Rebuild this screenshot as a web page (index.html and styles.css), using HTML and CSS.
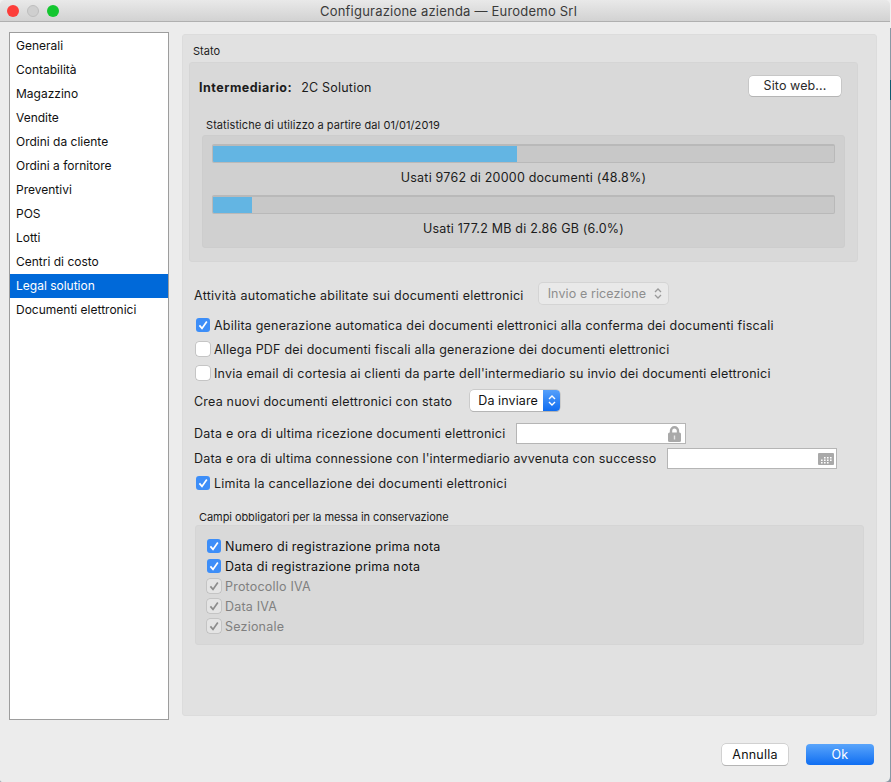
FILE: index.html
```html
<!DOCTYPE html>
<html lang="it">
<head>
<meta charset="utf-8">
<title>Configurazione azienda — Eurodemo Srl</title>
<link rel="stylesheet" href="styles.css">
</head>
<body>
<div class="window">
  <header class="titlebar">
    <div class="lights"><span class="light red"></span><span class="light grey"></span><span class="light green"></span></div>
    <div class="title">Configurazione azienda — Eurodemo Srl</div>
  </header>
  <div class="main">
    <nav class="sidebar">
      <div class="nav-item">Generali</div>
      <div class="nav-item">Contabilità</div>
      <div class="nav-item">Magazzino</div>
      <div class="nav-item">Vendite</div>
      <div class="nav-item">Ordini da cliente</div>
      <div class="nav-item">Ordini a fornitore</div>
      <div class="nav-item">Preventivi</div>
      <div class="nav-item">POS</div>
      <div class="nav-item">Lotti</div>
      <div class="nav-item">Centri di costo</div>
      <div class="nav-item selected">Legal solution</div>
      <div class="nav-item">Documenti elettronici</div>
    </nav>
    <section class="panel">
      <div class="group-label">Stato</div>
      <div class="stato-box">
        <div class="intermediario">
          <span class="bold">Intermediario:</span><span class="inter-name">2C Solution</span>
          <button class="btn site-btn">Sito web...</button>
        </div>
        <div class="stats-label">Statistiche di utilizzo a partire dal 01/01/2019</div>
        <div class="stats-box">
          <div class="bar"><div class="bar-fill" style="width:49%"></div></div>
          <div class="bar-label">Usati 9762 di 20000 documenti (48.8%)</div>
          <div class="bar"><div class="bar-fill" style="width:6.2%"></div></div>
          <div class="bar-label">Usati 177.2 MB di 2.86 GB (6.0%)</div>
        </div>
      </div>
      <div class="form">
        <div class="row row-activity">
          <span class="activity-text">Attività automatiche abilitate sui documenti elettronici</span>
          <span class="select disabled">Invio e ricezione
            <svg class="updown" width="8" height="13" viewBox="0 0 8 13"><path d="M1 5l3-3 3 3M1 8l3 3 3-3" fill="none" stroke="#9a9a9a" stroke-width="1.3"/></svg>
          </span>
        </div>
        <label class="check-row first"><span class="check on"><svg width="14" height="14" viewBox="0 0 14 14"><path d="M3.4 7.4l2.6 3 4.8-7" fill="none" stroke="#fff" stroke-width="1.7"/></svg></span>Abilita generazione automatica dei documenti elettronici alla conferma dei documenti fiscali</label>
        <label class="check-row"><span class="check"></span>Allega PDF dei documenti fiscali alla generazione dei documenti elettronici</label>
        <label class="check-row"><span class="check"></span>Invia email di cortesia ai clienti da parte dell'intermediario su invio dei documenti elettronici</label>
        <div class="row row-state">
          <span>Crea nuovi documenti elettronici con stato</span>
          <span class="select active"><span class="select-text">Da inviare</span><span class="select-arrow"><svg width="10" height="15" viewBox="0 0 10 15"><path d="M2 6l3-3 3 3M2 9l3 3 3-3" fill="none" stroke="#fff" stroke-width="1.4"/></svg></span></span>
        </div>
        <div class="row row-date">
          <span class="date-text-a">Data e ora di ultima ricezione documenti elettronici</span>
          <span class="field">
            <svg width="15" height="16" viewBox="0 0 15 16"><path d="M4 7V4.8a3.5 3.5 0 0 1 7 0V7" fill="none" stroke="#a9a9a9" stroke-width="2.4"/><rect x="1" y="6.5" width="13" height="9.5" rx="1.5" fill="#a9a9a9"/><rect x="6.8" y="9.5" width="1.4" height="4" fill="#e4e4e4"/></svg>
          </span>
        </div>
        <div class="row row-date2">
          <span class="date-text-b">Data e ora di ultima connessione con l'intermediario avvenuta con successo</span>
          <span class="field field-cal">
            <svg width="16" height="12" viewBox="0 0 16 12"><rect width="16" height="12" rx="1" fill="#a9a9a9"/><path d="M6 4h1.6v1.4H6zM9 4h1.6v1.4H9zM12 4h1.6v1.4H12zM3 6.5h1.6v1.4H3zM6 6.5h1.6v1.4H6zM9 6.5h1.6v1.4H9zM12 6.5h1.6v1.4H12zM3 9h1.6v1.4H3zM6 9h1.6v1.4H6zM9 9h1.6v1.4H9z" fill="#fff"/></svg>
          </span>
        </div>
        <label class="check-row row-limit"><span class="check on"><svg width="14" height="14" viewBox="0 0 14 14"><path d="M3.4 7.4l2.6 3 4.8-7" fill="none" stroke="#fff" stroke-width="1.7"/></svg></span>Limita la cancellazione dei documenti elettronici</label>
      </div>
      <div class="campi-label">Campi obbligatori per la messa in conservazione</div>
      <div class="campi-box">
        <label class="campi-row"><span class="check on"><svg width="14" height="14" viewBox="0 0 14 14"><path d="M3.4 7.4l2.6 3 4.8-7" fill="none" stroke="#fff" stroke-width="1.7"/></svg></span>Numero di registrazione prima nota</label>
        <label class="campi-row"><span class="check on"><svg width="14" height="14" viewBox="0 0 14 14"><path d="M3.4 7.4l2.6 3 4.8-7" fill="none" stroke="#fff" stroke-width="1.7"/></svg></span>Data di registrazione prima nota</label>
        <label class="campi-row off"><span class="check dim"><svg width="14" height="14" viewBox="0 0 14 14"><path d="M3.4 7.4l2.6 3 4.8-7" fill="none" stroke="#8c8c8c" stroke-width="1.7"/></svg></span>Protocollo IVA</label>
        <label class="campi-row off"><span class="check dim"><svg width="14" height="14" viewBox="0 0 14 14"><path d="M3.4 7.4l2.6 3 4.8-7" fill="none" stroke="#8c8c8c" stroke-width="1.7"/></svg></span>Data IVA</label>
        <label class="campi-row off"><span class="check dim"><svg width="14" height="14" viewBox="0 0 14 14"><path d="M3.4 7.4l2.6 3 4.8-7" fill="none" stroke="#8c8c8c" stroke-width="1.7"/></svg></span>Sezionale</label>
      </div>
    </section>
  </div>
  <footer class="footer">
    <button class="btn cancel">Annulla</button>
    <button class="btn ok">Ok</button>
  </footer>
</div>
</body>
</html>
```
FILE: styles.css
```css
* { box-sizing: border-box; }
html, body { margin: 0; padding: 0; height: 100%; }
body {
  width: 891px; height: 782px; overflow: hidden;
  background: linear-gradient(#f0f0f0 0 28px, #8a98a4 28px 80px, #0f5a70 80px 100px, #8a98a4 100px);
  font-family: Inter, "Liberation Sans", sans-serif; font-size: 12.5px; letter-spacing: .21px; color: #1c1c1c;
}
.window {
  width: 890px; height: 782px; background: #ececec;
  border-radius: 5px 5px 5px 2px; overflow: hidden;
  display: flex; flex-direction: column;
}
.titlebar {
  height: 22px; flex: none; position: relative;
  background: linear-gradient(#e9e9e9, #d2d2d2);
  border-bottom: 1px solid #b0b0b0;
  display: flex; align-items: center; justify-content: center;
}
.lights { position: absolute; left: 7px; top: 5px; display: flex; gap: 8px; }
.light { width: 12px; height: 12px; border-radius: 50%; }
.red { background: #fc3d39; }
.grey { background: #cfcfcf; border: 1px solid #bdbdbd; }
.green { background: #13c62f; }
.title { font-size: 13px; letter-spacing: .21px; color: #3a3a3a; margin-left: 7px; }
.main { flex: 1; display: flex; padding: 10px 0 0 9px; align-items: flex-start; }
.sidebar {
  width: 160px; height: 688px; flex: none; background: #fff;
  border: 1px solid #9d9d9d; padding-top: 1px;
}
.nav-item { height: 24px; line-height: 24px; padding-left: 6px; color: #111; font-size: 12px; letter-spacing: 0; }
.nav-item.selected { background: #0069d9; color: #fff; }
.panel {
  width: 695px; height: 682px; margin: 2px 0 0 13px; background: #e1e1e1;
  border: 1px solid #dcdcdc; border-radius: 3px; padding: 0 0 0 6px;
}
.group-label { font-size: 11px; letter-spacing: 0; margin: 10px 0 4px 4px; height: 13px; line-height: 13px; }
.stato-box {
  width: 669px; height: 200px; background: #d9d9d9; border-radius: 3px;
  border: 1px solid #d5d5d5; padding: 0 12px;
}
.intermediario { display: flex; align-items: center; height: 21px; margin: 14px 0 0 -3px; }
.bold { font-weight: 700; letter-spacing: .5px; }
.inter-name { margin-left: 9px; }
.btn {
  font: inherit; letter-spacing: inherit; height: 21px; border-radius: 4px; background: #fff; color: #2a2a2a;
  border: 0; box-shadow: 0 0 0 .5px #b5b5b5, 0 1px 0 #b5b5b5; padding: 0;
}
.site-btn { width: 92px; height: 20px; margin: 0 4px 4px auto; letter-spacing: .1px; }
.stats-label { font-size: 11px; letter-spacing: .07px; margin: 20px 0 3px 4px; height: 14px; line-height: 14px; }
.stats-box {
  height: 113px; background: #d0d0d0; border-radius: 3px; border: 1px solid #cdcdcd; padding: 8px 9px 0;
}
.bar {
  height: 19px; background: #c8c8c8; border: 1px solid #b9b9b9; border-radius: 2px; overflow: hidden;
  border-top-width: 2px;
}
.bar-fill { height: 100%; background: #63b5e3; }
.bar-label { text-align: center; height: 32px; line-height: 30px; }
.form { padding-left: 5px; }
.row { display: flex; align-items: center; }
.row-activity { margin-top: 21px; height: 24px; }
.activity-text { letter-spacing: .27px; }
.select { display: inline-flex; align-items: center; height: 21px; border-radius: 4px; }
.select.disabled {
  width: 129px; margin: -3px 0 0 15px; padding-left: 9px; color: #8e8e8e; background: #e9e9e9;
  box-shadow: 0 0 0 1px #d4d4d4; letter-spacing: .1px;
}
.updown { margin-left: auto; margin-right: 6px; }
.check-row { display: flex; align-items: center; height: 24px; }
.check-row.first { margin-top: 6px; }
.check {
  width: 14px; height: 14px; flex: none; margin: 0 4px 0 2px; border-radius: 3px; background: #fff;
  box-shadow: 0 0 0 .5px #aaa; display: inline-flex;
}
.check.on { background: #3d8ef8; box-shadow: none; }
.check.dim { background: #e4e4e4; box-shadow: 0 0 0 .5px #b0b0b0; }
.row-state { height: 24px; margin-top: 4px; }
.select.active {
  margin: -1px 0 0 18px; width: 90px; background: #fff; box-shadow: 0 0 0 .5px #b5b5b5, 0 1px 0 #b5b5b5; overflow: hidden; color: #111;
}
.select-text { padding-left: 8px; flex: 1; letter-spacing: .1px; }
.select-arrow {
  width: 17px; height: 21px; background: linear-gradient(#55a0fb, #0f6cf0); display: flex; align-items: center; justify-content: center;
}
.row-date { height: 23px; margin-top: 9px; }
.row-date2 { height: 23px; margin-top: 2px; }
.date-text-a { letter-spacing: .23px; }
.date-text-b { letter-spacing: .18px; }
.field {
  width: 170px; margin-left: 11px; height: 21px; background: #fff; border: 1px solid #b5b5b5; display: flex; align-items: center; justify-content: flex-end; padding-right: 3px;
}
.field-cal { padding-right: 2px; margin-left: 10px; }
.row-limit { margin-top: 1px; }
.campi-label { font-size: 11px; letter-spacing: -.07px; margin: 15px 0 1px 10px; height: 14px; line-height: 14px; }
.campi-box {
  margin-left: 6px; width: 669px; height: 120px; background: #d9d9d9; border: 1px solid #d5d5d5;
  border-radius: 3px; padding-top: 10px;
}
.campi-row { display: flex; align-items: center; height: 20px; padding-left: 9px; color: #111; }
.campi-row.off { color: #808080; }
.footer { height: 60px; flex: none; display: flex; justify-content: flex-end; align-items: flex-start; gap: 18px; padding: 22px 16px 0 0; }
.cancel { width: 66px; color: #111; }
.ok { width: 68px; color: #fff; background: linear-gradient(#5aa5fb, #0f6ef2); box-shadow: none; }
```
